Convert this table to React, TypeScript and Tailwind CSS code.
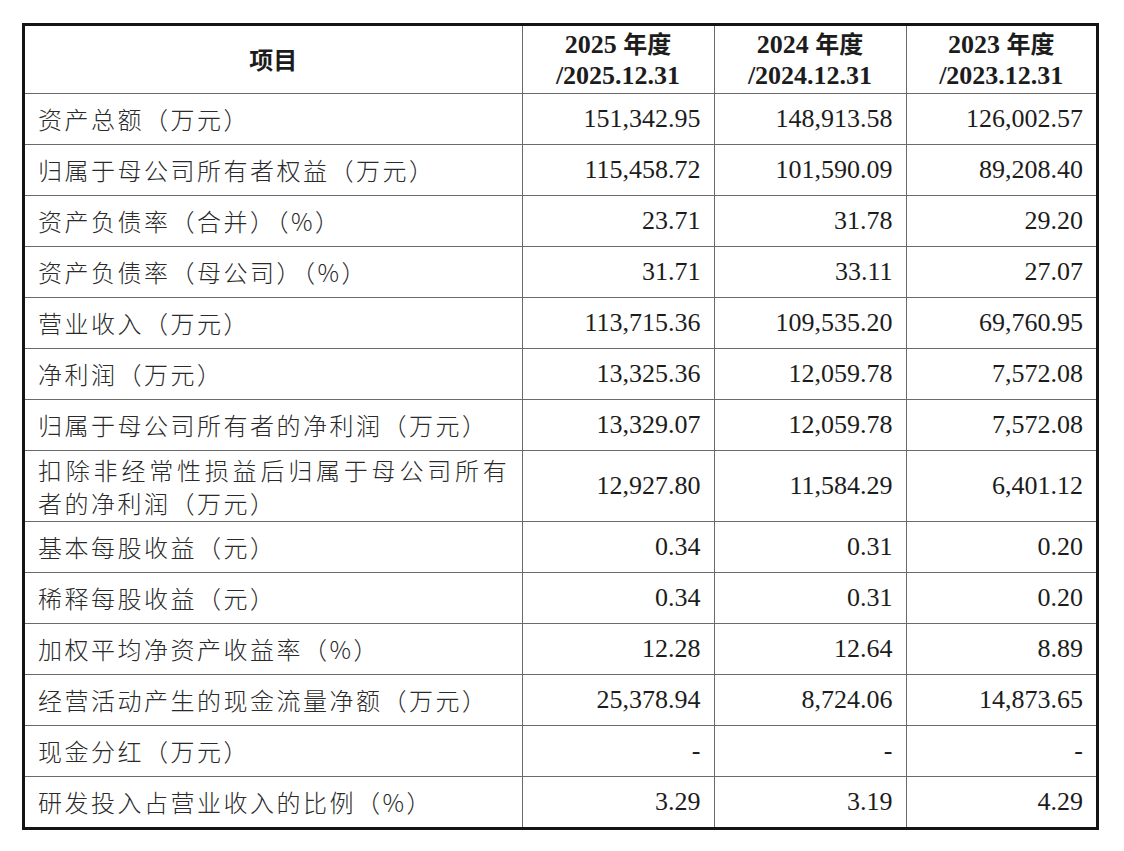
const serif = '"Liberation Serif", "Noto Sans CJK SC", serif';
const cjk = '"Noto Sans CJK SC", "Liberation Sans", sans-serif';

interface Row {
  label: string[];
  values: string[];
}

const rows: Row[] = [
  { label: ['资产总额（万元）'], values: ['151,342.95', '148,913.58', '126,002.57'] },
  { label: ['归属于母公司所有者权益（万元）'], values: ['115,458.72', '101,590.09', '89,208.40'] },
  { label: ['资产负债率（合并）（%）'], values: ['23.71', '31.78', '29.20'] },
  { label: ['资产负债率（母公司）（%）'], values: ['31.71', '33.11', '27.07'] },
  { label: ['营业收入（万元）'], values: ['113,715.36', '109,535.20', '69,760.95'] },
  { label: ['净利润（万元）'], values: ['13,325.36', '12,059.78', '7,572.08'] },
  { label: ['归属于母公司所有者的净利润（万元）'], values: ['13,329.07', '12,059.78', '7,572.08'] },
  {
    label: ['扣除非经常性损益后归属于母公司所有', '者的净利润（万元）'],
    values: ['12,927.80', '11,584.29', '6,401.12'],
  },
  { label: ['基本每股收益（元）'], values: ['0.34', '0.31', '0.20'] },
  { label: ['稀释每股收益（元）'], values: ['0.34', '0.31', '0.20'] },
  { label: ['加权平均净资产收益率（%）'], values: ['12.28', '12.64', '8.89'] },
  { label: ['经营活动产生的现金流量净额（万元）'], values: ['25,378.94', '8,724.06', '14,873.65'] },
  { label: ['现金分红（万元）'], values: ['-', '-', '-'] },
  { label: ['研发投入占营业收入的比例（%）'], values: ['3.29', '3.19', '4.29'] },
];

const years = [
  ['2025', '/2025.12.31'],
  ['2024', '/2024.12.31'],
  ['2023', '/2023.12.31'],
];

export default function App() {
  return (
    <div className="min-h-[851px] w-[1124px] bg-white pt-[23px] pl-[22px]">
      <div className="w-[1077px] border-[3px] border-[#141414]">
        <table className="w-full table-fixed border-collapse border-hidden text-[#1c1c1c]">
          <colgroup>
            <col className="w-[497px]" />
            <col className="w-[192px]" />
            <col className="w-[192px]" />
            <col className="w-[190px]" />
          </colgroup>
          <thead>
            <tr className="h-[67px]">
              <th
                className="border border-[#6a6a6a] text-[24px] font-bold"
                style={{ fontFamily: cjk }}
              >
                项目
              </th>
              {years.map(([y, d]) => (
                <th
                  key={y}
                  className="border border-[#6a6a6a] text-[26px] font-bold leading-[31px]"
                  style={{ fontFamily: serif }}
                >
                  <div>
                    {y} <span style={{ fontFamily: cjk }} className="text-[24px]">年度</span>
                  </div>
                  <div>{d}</div>
                </th>
              ))}
            </tr>
          </thead>
          <tbody>
            {rows.map((row, i) => (
              <tr key={i} className={row.label.length > 1 ? 'h-[71px]' : 'h-[51px]'}>
                <td
                  className="border border-[#6a6a6a] pl-[13px] text-[24px] leading-[33px] font-light tracking-[2.5px] text-[#2a2a2a]"
                  style={{ fontFamily: cjk }}
                >
                  {row.label.length > 1 ? (
                    <>
                      <div className="tracking-[3.8px]">{row.label[0]}</div>
                      <div>{row.label[1]}</div>
                    </>
                  ) : (
                    row.label[0]
                  )}
                </td>
                {row.values.map((v, j) => (
                  <td
                    key={j}
                    className="border border-[#6a6a6a] pr-[13px] text-right text-[26px]"
                    style={{ fontFamily: serif }}
                  >
                    {v}
                  </td>
                ))}
              </tr>
            ))}
          </tbody>
        </table>
      </div>
    </div>
  );
}
